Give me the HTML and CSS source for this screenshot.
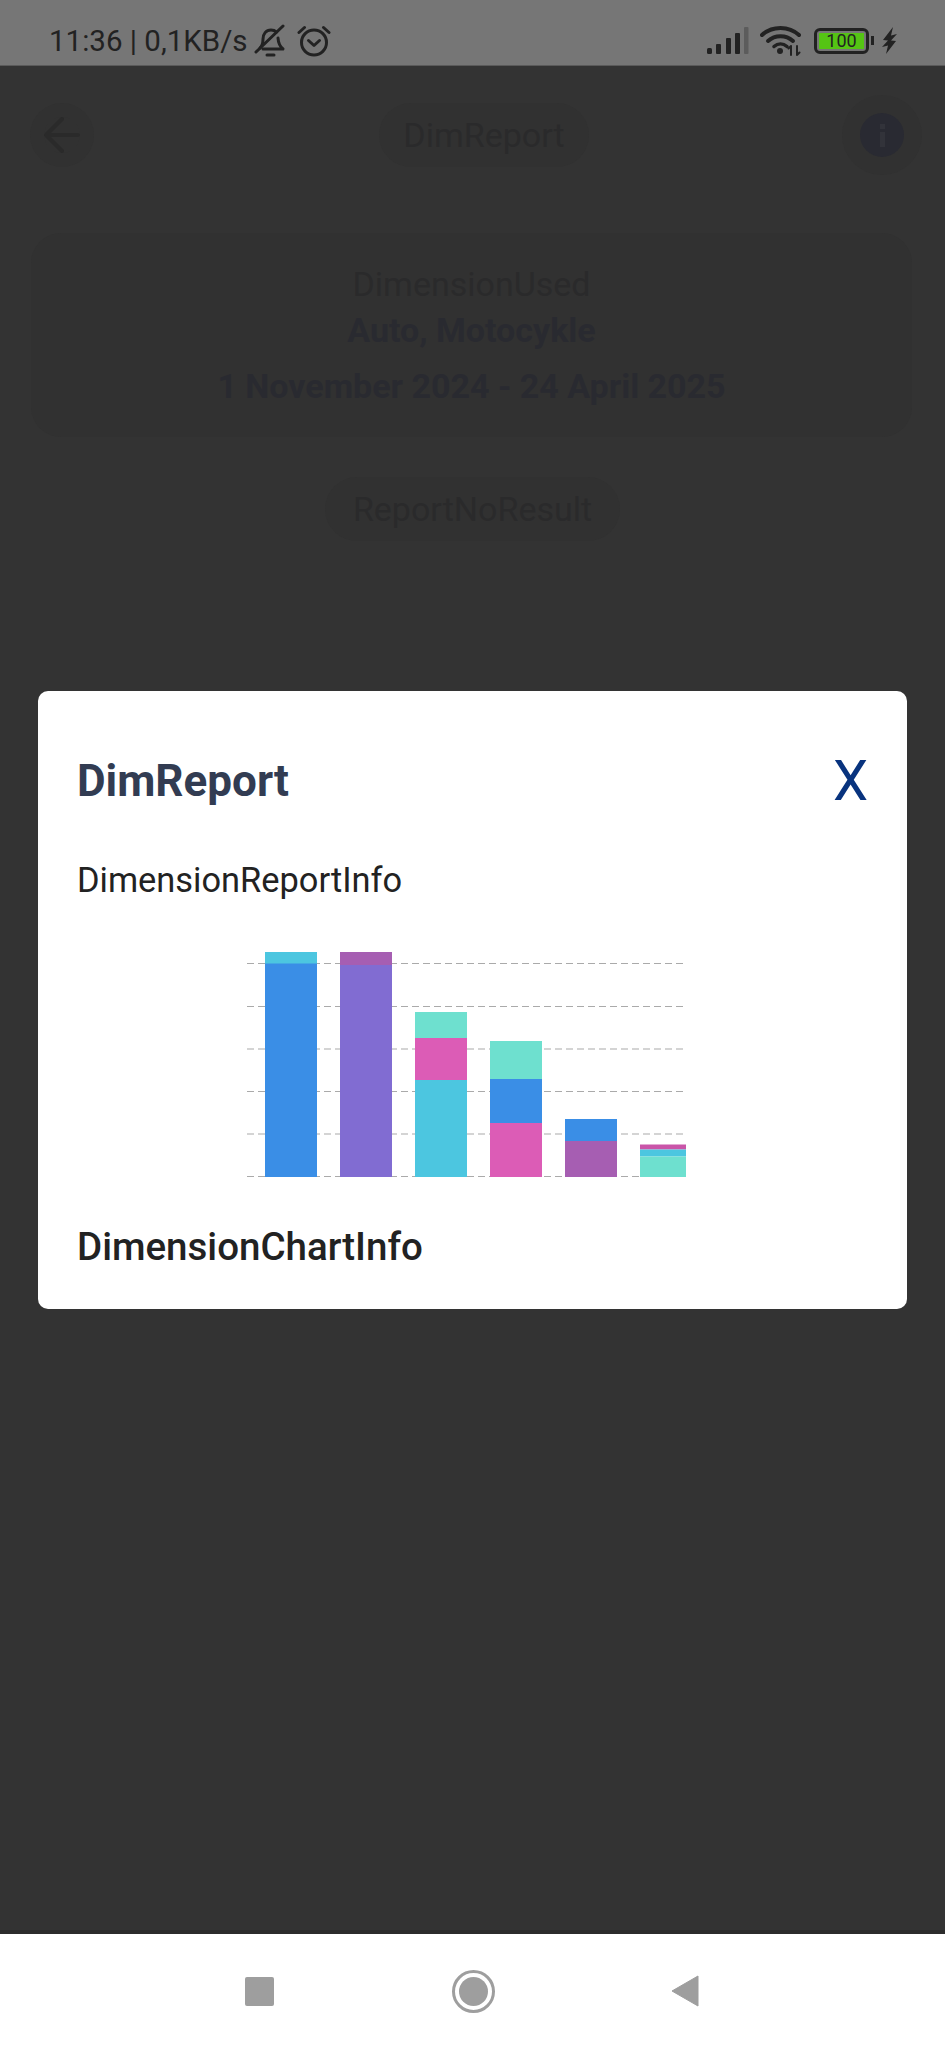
FILE: index.html
```html
<!DOCTYPE html>
<html lang="en">
<head>
    <meta charset="UTF-8">
    <meta name="viewport" content="width=device-width, initial-scale=1.0">
    <title>DimReport</title>
    <link rel="stylesheet" href="styles.css">
</head>
<body>
    <div class="status-bar">
        <div class="status-left">
            <span class="status-text">11:36 | 0,1KB/s</span>
            <svg class="bell-icon" width="32" height="34" viewBox="0 0 32 34" fill="none" stroke="#222" stroke-width="3" stroke-linecap="round" stroke-linejoin="round">
                <path d="M6 24c2-2 3-4 3-9 0-5 3-9 8-9 2 0 4 .6 5.500 2"/>
                <path d="M24 14c.3 5 1.500 8 5 11H9"/>
                <path d="M2 28 29 2"/>
                <path d="M13 31h7"/>
            </svg>
            <svg class="alarm-icon" width="34" height="32" viewBox="0 0 34 32" fill="none" stroke="#222" stroke-width="3" stroke-linecap="round" stroke-linejoin="round">
                <circle cx="17" cy="17.500" r="12.500"/>
                <path d="M11.500 15.500 17 20.500l5.500-5"/>
                <path d="M2 7.500 7.500 2.500"/>
                <path d="M32 7.500 26.500 2.500"/>
            </svg>
        </div>
        <div class="status-right">
            <svg class="signal-icon" width="42" height="28" viewBox="0 0 42 28">
                <rect x="0" y="21" width="5" height="6" rx="1.500" fill="#222"/>
                <rect x="9" y="17" width="5" height="10" rx="1" fill="#222"/>
                <rect x="19" y="11" width="5" height="16" rx="1" fill="#222"/>
                <rect x="28" y="6" width="5" height="21" rx="1" fill="#222"/>
                <rect x="37" y="0" width="4.500" height="27" rx="1" fill="#5c5c5c"/>
            </svg>
            <svg class="wifi-icon" width="41" height="31" viewBox="0 0 41 31" fill="none" stroke="#222" stroke-linecap="round">
                <path d="M2 10C12 .5 29 .5 39 10" stroke-width="4"/>
                <path d="M8 16c7-6.500 18-6.500 25 0" stroke-width="4"/>
                <path d="M14 21.500c4-3.500 9-3.500 13 0" stroke-width="3.500"/>
                <circle cx="20" cy="26" r="3" fill="#222" stroke="none"/>
                <path d="M31 21v9M28.500 23.500 31 21M37 21v9M37 30l2.500-2.500" stroke-width="2"/>
            </svg>
            <div class="battery">
                <div class="battery-body"><span class="battery-level">100</span></div>
                <div class="battery-nub"></div>
            </div>
            <svg class="bolt-icon" width="15" height="27" viewBox="0 0 15 27">
                <path d="M11 0 1 13l5 .5L0 20l6-1.500L4 27l10-13-5-.5 6-6.500-6 1.500z" fill="#222"/>
            </svg>
        </div>
    </div>

    <div class="screen">
        <div class="header">
            <svg class="back-icon" width="36" height="36" viewBox="0 0 36 36" fill="none" stroke="#2a2a2a" stroke-width="4" stroke-linecap="round" stroke-linejoin="round">
                <path d="M34 18H3M18 2 2 18l16 16"/>
            </svg>
            <span class="header-title">DimReport</span>
            <div class="info-icon"><span class="info-dot"></span><span class="info-bar"></span></div>
        </div>

        <div class="summary">
            <div class="summary-label">DimensionUsed</div>
            <div class="summary-value">Auto, Motocykle</div>
            <div class="summary-dates">1 November 2024 - 24 April 2025</div>
        </div>

        <div class="no-result"><span class="no-result-text">ReportNoResult</span></div>

        <div class="modal">
            <div class="modal-head">
                <span class="modal-title">DimReport</span>
                <span class="modal-close">X</span>
            </div>
            <p class="modal-info">DimensionReportInfo</p>
            <svg class="chart" width="440" height="230" viewBox="247 950 440 230">
                <g class="grid">
                    <line x1="247" x2="684" y1="963.500" y2="963.500"/>
                    <line x1="247" x2="684" y1="1006.500" y2="1006.500"/>
                    <line x1="247" x2="684" y1="1049" y2="1049"/>
                    <line x1="247" x2="684" y1="1091.500" y2="1091.500"/>
                    <line x1="247" x2="684" y1="1134" y2="1134"/>
                    <line x1="247" x2="684" y1="1176.500" y2="1176.500"/>
                </g>
                <rect x="265" y="952" width="52" height="12" fill="#4cc6e0"/>
                <rect x="265" y="963.500" width="52" height="213.500" fill="#3a8ee6"/>

                <rect x="340" y="952" width="52" height="13" fill="#a65eb2"/>
                <rect x="340" y="965" width="52" height="212" fill="#816cd2"/>

                <rect x="415" y="1012" width="52" height="26" fill="#6ee0cf"/>
                <rect x="415" y="1038" width="52" height="42" fill="#dc5cb6"/>
                <rect x="415" y="1080" width="52" height="97" fill="#4cc6e0"/>

                <rect x="490" y="1041" width="52" height="38" fill="#6ee0cf"/>
                <rect x="490" y="1079" width="52" height="44" fill="#3a8ee6"/>
                <rect x="490" y="1123" width="52" height="54" fill="#dc5cb6"/>

                <rect x="565" y="1119" width="52" height="22" fill="#3a8ee6"/>
                <rect x="565" y="1141" width="52" height="36" fill="#a65eb2"/>

                <rect x="640" y="1144.500" width="46" height="5" fill="#c955a8"/>
                <rect x="640" y="1149.500" width="46" height="7" fill="#4cc6e0"/>
                <rect x="640" y="1156.500" width="46" height="20.500" fill="#6ee0cf"/>
            </svg>
            <p class="modal-chart-info">DimensionChartInfo</p>
        </div>
    </div>

    <div class="nav-bar">
        <div class="nav-square"></div>
        <div class="nav-home"><div class="nav-home-dot"></div></div>
        <svg class="nav-back" width="28" height="32" viewBox="0 0 28 32">
            <path d="M27 1v30L1 16z" fill="#9e9e9e" stroke="#9e9e9e" stroke-linejoin="round"/>
        </svg>
    </div>
</body>
</html>
```

FILE: styles.css
```css
* {
    box-sizing: border-box;
}
body {
    margin: 0;
    width: 945px;
    height: 2048px;
    display: flex;
    flex-direction: column;
    font-family: Roboto, "Liberation Sans", sans-serif;
    background-color: #333;
    overflow: hidden;
}
.status-bar {
    height: 66px;
    flex-shrink: 0;
    display: flex;
    justify-content: space-between;
    align-items: center;
    padding: 16px 48px 0 49px;
    background-color: #767676;
    border-bottom: 1px solid #5a5a5a;
}
.status-left,
.status-right {
    display: flex;
    align-items: center;
}
.status-text {
    font-size: 29.500px;
    color: #222;
    margin-right: 6px;
}
.alarm-icon {
    margin-left: 11px;
}
.wifi-icon {
    margin-left: 11px;
}
.battery {
    display: flex;
    align-items: center;
    margin-left: 13px;
}
.battery-body {
    width: 55px;
    height: 26px;
    padding: 2px;
    border: 3px solid #222;
    border-radius: 6px;
}
.battery-level {
    display: block;
    height: 100%;
    background-color: #55c414;
    color: #222;
    font-size: 18px;
    line-height: 16px;
    text-align: center;
}
.battery-nub {
    width: 3px;
    height: 9px;
    margin-left: 2px;
    background-color: #222;
}
.bolt-icon {
    margin-left: 8px;
}

.screen {
    position: relative;
    flex: 1;
    border-bottom: 4px solid #2c2c2c;
    background-color: #333;
}
.header {
    height: 138px;
    display: flex;
    justify-content: space-between;
    align-items: center;
    padding: 0 41px 0 44px;
}
.back-icon {
    border-radius: 50%;
    box-shadow: 0 0 0 14px #313131;
    background-color: #313131;
}
.header-title {
    margin-left: 28px;
    padding: 12px 24px;
    border-radius: 34px;
    background-color: #313131;
    font-size: 34px;
    color: #2a2a2b;
}
.info-icon {
    width: 44px;
    height: 44px;
    display: flex;
    flex-direction: column;
    align-items: center;
    justify-content: center;
    gap: 3px;
    border-radius: 50%;
    background-color: #292a32;
    box-shadow: 0 0 0 18px #313131;
}
.info-dot {
    width: 5px;
    height: 5px;
    background-color: #32333a;
}
.info-bar {
    width: 5px;
    height: 15px;
    background-color: #32333a;
}
.summary {
    margin: 29px 33px 0 31px;
    height: 204px;
    padding-top: 33px;
    border-radius: 30px;
    background-color: #313131;
    text-align: center;
}
.summary-label {
    font-size: 34px;
    line-height: 36px;
    color: #2a2a2b;
}
.summary-value {
    font-size: 34px;
    line-height: 36px;
    font-weight: 700;
    color: #292a30;
    margin-top: 10px;
}
.summary-dates {
    font-size: 34px;
    line-height: 40px;
    font-weight: 700;
    color: #292a30;
    margin-top: 18px;
}
.no-result {
    margin-top: 40px;
    text-align: center;
}
.no-result-text {
    display: inline-block;
    padding: 14px 28px;
    border-radius: 34px;
    background-color: #313131;
    font-size: 34px;
    line-height: 36px;
    color: #2a2a2b;
}

.modal {
    position: absolute;
    top: 625px;
    left: 38px;
    width: 869px;
    height: 618px;
    padding: 0 39px;
    border-radius: 10px;
    background-color: #fff;
}
.modal-head {
    display: flex;
    justify-content: space-between;
    align-items: center;
    height: 60px;
    margin-top: 60px;
}
.modal-title {
    font-size: 44px;
    font-weight: 700;
    color: #323c52;
}
.modal-close {
    font-size: 56px;
    color: #08337e;
}
.modal-info {
    margin: 50px 0 0;
    font-size: 34.400px;
    line-height: 38px;
    color: #222;
}
.chart {
    display: block;
    margin: 51px 0 0 170px;
}
.grid line {
    stroke: #aaa;
    stroke-width: 1.200;
    stroke-dasharray: 7 4;
}
.modal-chart-info {
    margin: 47px 0 0;
    font-size: 38.500px;
    line-height: 40px;
    font-weight: 500;
    color: #222;
}

.nav-bar {
    height: 114px;
    flex-shrink: 0;
    display: flex;
    align-items: center;
    padding-left: 245px;
    background-color: #fff;
}
.nav-square {
    width: 29px;
    height: 29px;
    border-radius: 2px;
    background-color: #9e9e9e;
}
.nav-home {
    width: 43px;
    height: 43px;
    margin-left: 178px;
    display: flex;
    align-items: center;
    justify-content: center;
    border: 3px solid #9e9e9e;
    border-radius: 50%;
}
.nav-home-dot {
    width: 29px;
    height: 29px;
    border-radius: 50%;
    background-color: #9e9e9e;
}
.nav-back {
    margin-left: 176px;
}
```
